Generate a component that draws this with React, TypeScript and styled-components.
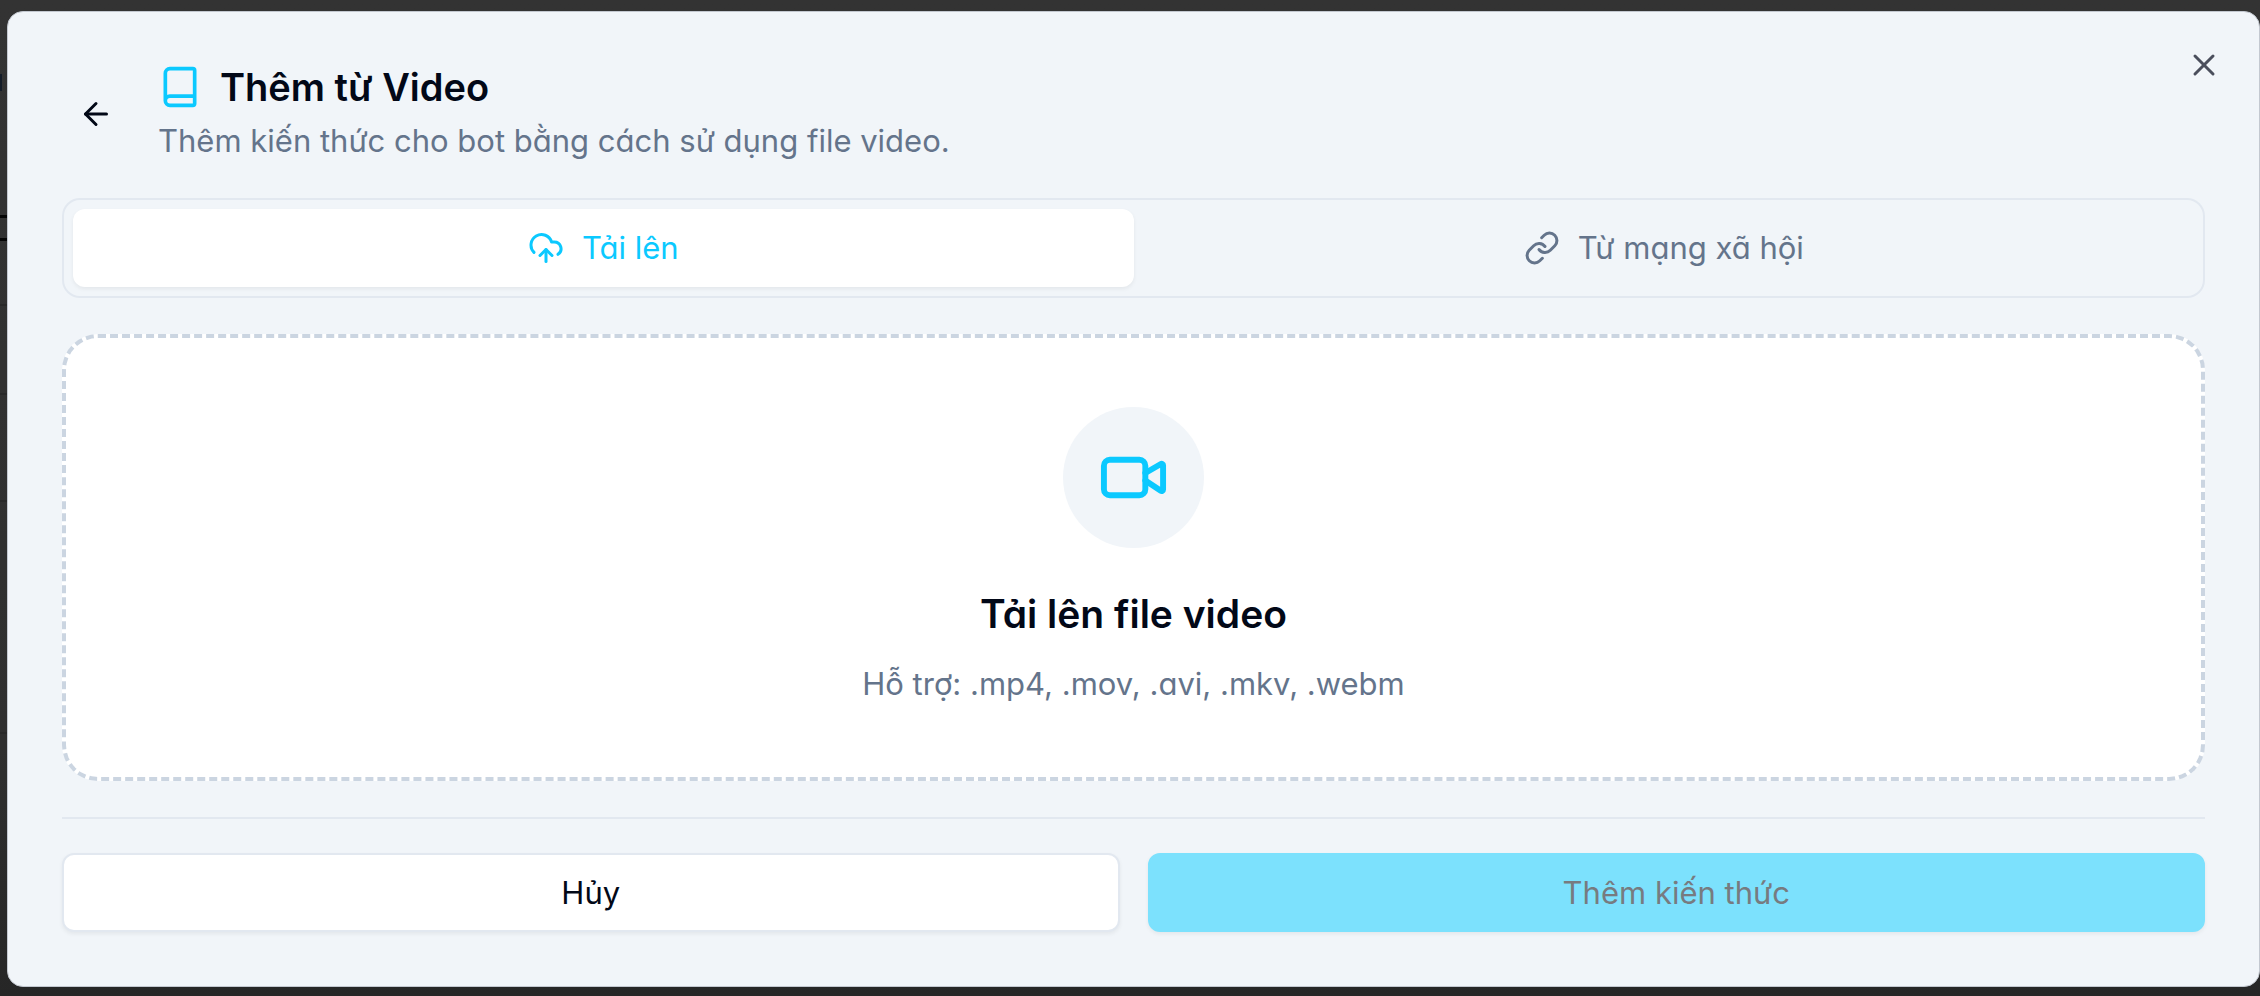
import React, { useState } from "react";
import styled, { createGlobalStyle } from "styled-components";
import { ArrowLeft, Book, CloudUpload, Link as LinkIcon, Video, X } from "lucide-react";

const GlobalStyle = createGlobalStyle`
  *, *::before, *::after { box-sizing: border-box; }
  body {
    margin: 0;
    background: #303030;
    color: #020817;
    font-family: Inter, "Noto Sans", sans-serif;
    font-feature-settings: "cv11";
    font-size: 31px;
    line-height: 48px;
  }
  button { font: inherit; font-feature-settings: inherit; color: inherit; cursor: pointer; }
  h2, h3, p { margin: 0; }
`;

const Overlay = styled.div`
  position: relative;
  min-height: 100vh;
  padding: 11px 0 9px 7px;
  background: linear-gradient(#333333, #2f2f2f 75%, #262626);
`;

/* The dimmed page that shows past the dialog's left edge. */
const PageBehind = styled.div`
  position: absolute;
  inset: 0 auto 0 0;
  width: 10px;
  padding-top: 74px;
`;

const HeadingEnd = styled.div`
  width: 2px;
  height: 17px;
  margin-bottom: 124px;
  background: #141c28;
`;

const FieldEnd = styled.div`
  height: 26px;
  margin-bottom: 63px;
  border: solid #050505;
  border-width: 3px 0;
`;

const ListRow = styled.div<{ $height: number }>`
  height: ${(p) => p.$height}px;
  border-top: 2px solid #292929;
`;

const Dialog = styled.section`
  position: relative;
  padding: 51px 54px 54px;
  border: 1px solid #c3c8d0;
  border-radius: 16px;
  background: #f1f5f9;
`;

const CloseButton = styled.button`
  position: absolute;
  top: 35px;
  right: 37px;
  display: flex;
  padding: 0;
  border: 0;
  background: none;
  color: #4a4e5c;
`;

const Header = styled.header`
  display: flex;
  align-items: center;
  gap: 28px;
  margin-bottom: 33px;
`;

const Heading = styled.div`
  display: flex;
  flex-direction: column;
  gap: 6px;
`;

const BackButton = styled.button`
  display: grid;
  place-items: center;
  width: 68px;
  height: 68px;
  padding: 0;
  border: 0;
  border-radius: 12px;
  background: none;
`;

const Title = styled.h2`
  display: flex;
  align-items: center;
  gap: 18px;
  font-size: 38px;
  font-weight: 600;
  line-height: 48px;
  svg { color: #0bc9ff; }
`;

const Muted = styled.p`
  color: #64748b;
`;

const Tabs = styled.div`
  display: grid;
  grid-template-columns: 1fr 1fr;
  padding: 9px;
  border: 2px solid #e2e8f0;
  border-radius: 18px;
`;

const Tab = styled.button<{ $active: boolean }>`
  display: flex;
  align-items: center;
  justify-content: center;
  gap: 18px;
  height: 78px;
  border: 0;
  border-radius: 12px;
  background: ${(p) => (p.$active ? "#fff" : "transparent")};
  color: ${(p) => (p.$active ? "#0bc9ff" : "#64748b")};
  box-shadow: ${(p) => (p.$active ? "0 2px 4px rgba(0, 0, 0, 0.06)" : "none")};
`;

const DropZone = styled.div`
  display: flex;
  flex-direction: column;
  align-items: center;
  margin-top: 36px;
  padding: 69px 32px;
  border: 4px dashed #cbd5e1;
  border-radius: 36px;
  background: #fff;
`;

const IconCircle = styled.div`
  display: grid;
  place-items: center;
  width: 141px;
  height: 141px;
  margin-bottom: 42px;
  border-radius: 50%;
  background: #f1f5f9;
  color: #0bc9ff;
`;

const DropTitle = styled.h3`
  margin-bottom: 22px;
  font-size: 39px;
  font-weight: 600;
  line-height: 48px;
`;

const Footer = styled.footer`
  display: grid;
  grid-template-columns: 1fr 1fr;
  gap: 28px;
  margin-top: 36px;
  padding-top: 34px;
  border-top: 2px solid #e2e8f0;
`;

const ActionButton = styled.button<{ $primary?: boolean }>`
  height: 79px;
  border: 2px solid ${(p) => (p.$primary ? "#7ce1fd" : "#e2e8f0")};
  border-radius: 12px;
  background: ${(p) => (p.$primary ? "#7ce1fd" : "#fff")};
  color: ${(p) => (p.$primary ? "#777b80" : "#020817")};
  box-shadow: 0 2px 4px rgba(0, 0, 0, 0.06);
`;

export default function App() {
  const [tab, setTab] = useState("upload");
  return (
    <>
      <GlobalStyle />
      <Overlay>
        <PageBehind aria-hidden="true">
          <HeadingEnd />
          <FieldEnd />
          <ListRow $height={89} />
          <ListRow $height={107} />
          <ListRow $height={232} />
          <ListRow $height={60} />
        </PageBehind>
        <Dialog role="dialog" aria-labelledby="dialog-title">
          <Header>
            <BackButton type="button" aria-label="Quay lại">
              <ArrowLeft size={36} />
            </BackButton>
            <Heading>
              <Title id="dialog-title">
                <Book size={44} />
                Thêm từ Video
              </Title>
              <Muted>Thêm kiến thức cho bot bằng cách sử dụng file video.</Muted>
            </Heading>
          </Header>
          <Tabs role="tablist">
            <Tab type="button" role="tab" aria-selected={tab === "upload"} $active={tab === "upload"} onClick={() => setTab("upload")}>
              <CloudUpload size={36} />
              Tải lên
            </Tab>
            <Tab type="button" role="tab" aria-selected={tab === "social"} $active={tab === "social"} onClick={() => setTab("social")}>
              <LinkIcon size={36} />
              Từ mạng xã hội
            </Tab>
          </Tabs>
          <DropZone>
            <IconCircle>
              <Video size={71} />
            </IconCircle>
            <DropTitle>Tải lên file video</DropTitle>
            <Muted>Hỗ trợ: .mp4, .mov, .avi, .mkv, .webm</Muted>
          </DropZone>
          <Footer>
            <ActionButton type="button">Hủy</ActionButton>
            <ActionButton type="button" $primary disabled>
              Thêm kiến thức
            </ActionButton>
          </Footer>
          <CloseButton type="button" aria-label="Đóng">
            <X size={36} />
          </CloseButton>
        </Dialog>
      </Overlay>
    </>
  );
}
